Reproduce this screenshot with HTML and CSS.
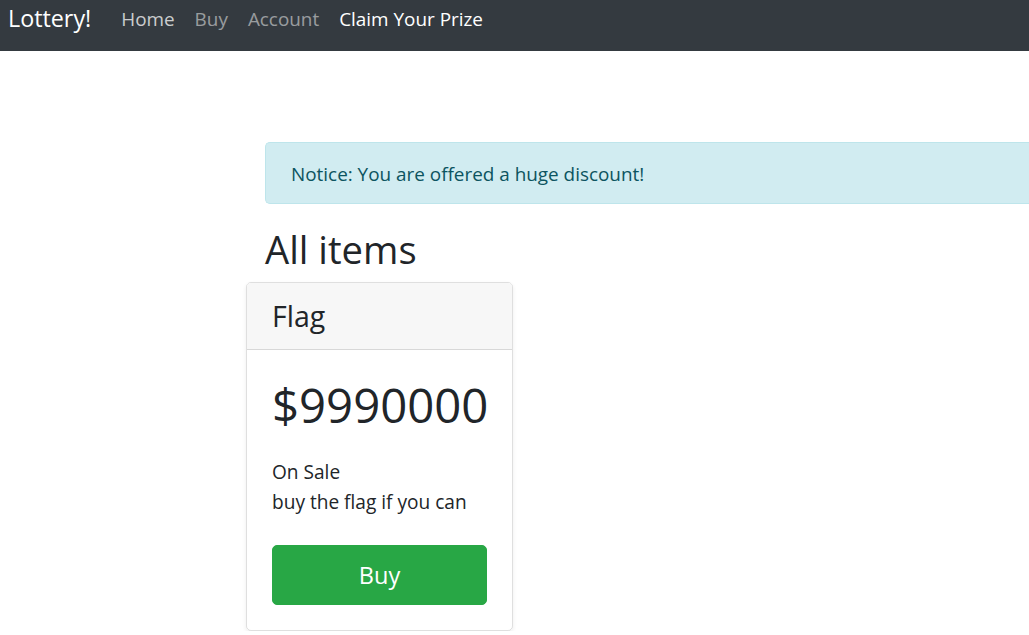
FILE: index.html
```html
<!DOCTYPE html>
<html lang="en">
<head>
<meta charset="utf-8">
<title>Lottery!</title>
<link rel="stylesheet" href="styles.css">
</head>
<body>
<nav class="navbar">
  <a class="brand" href="#">Lottery!</a>
  <ul class="nav">
    <li><a class="nav-link" href="#">Home</a></li>
    <li><a class="nav-link muted" href="#">Buy</a></li>
    <li><a class="nav-link muted" href="#">Account</a></li>
    <li><a class="nav-link active" href="#">Claim Your Prize</a></li>
  </ul>
</nav>
<main class="container">
  <div class="alert">Notice: You are offered a huge discount!</div>
  <h2 class="title">All items</h2>
  <div class="row">
    <div class="card">
      <div class="card-header"><h4 class="card-name">Flag</h4></div>
      <div class="card-body">
        <h1 class="price">$9990000</h1>
        <ul class="details">
          <li>On Sale</li>
          <li>buy the flag if you can</li>
        </ul>
        <button class="btn-buy" type="button">Buy</button>
      </div>
    </div>
  </div>
</main>
</body>
</html>
```
FILE: styles.css
```css
html, body {
  margin: 0;
  padding: 0;
  overflow: hidden;
}
body {
  font-family: "Open Sans", "Noto Sans", "Liberation Sans", sans-serif;
  color: #212529;
  background: #fff;
  font-size: 20px;
  line-height: 30px;
}
.navbar {
  height: 51px;
  box-sizing: border-box;
  background: #343a40;
  display: flex;
  align-items: flex-start;
  padding: 0 8px;
}
.brand {
  color: #fff;
  text-decoration: none;
  font-size: 23.3px;
  line-height: 37px;
  margin-right: 20px;
}
.nav {
  list-style: none;
  margin: 0;
  padding: 0;
  display: flex;
}
.nav-link {
  display: block;
  padding: 0 10px;
  line-height: 38px;
  font-size: 18.9px;
  color: rgba(255, 255, 255, 0.75);
  text-decoration: none;
}
.nav-link.muted {
  color: rgba(255, 255, 255, 0.5);
}
.nav-link.active {
  color: #fff;
}
.container {
  margin-left: 265px;
  padding-top: 91px;
}
.alert {
  background: #d1ecf1;
  border: 1px solid #bee5eb;
  border-right: none;
  color: #0c5460;
  border-radius: 5px 0 0 5px;
  padding: 16px 25px 14px;
  font-size: 18.9px;
  line-height: 30px;
  margin-bottom: 20px;
}
.title {
  margin: 0 0 10px;
  padding-top: 3px;
  font-size: 38.2px;
  line-height: 45px;
  font-weight: 400;
}
.row {
  display: flex;
  margin-left: -19px;
}
.card {
  width: 267px;
  box-sizing: border-box;
  border: 1px solid rgba(0, 0, 0, 0.125);
  border-radius: 5px;
  box-shadow: 0 2px 4px rgba(0, 0, 0, 0.075);
  overflow: hidden;
}
.card-header {
  background: #f7f7f7;
  border-bottom: 1px solid rgba(0, 0, 0, 0.125);
  padding: 15px 25px;
}
.card-name {
  margin: 0;
  font-size: 28.5px;
  line-height: 36px;
  font-weight: 400;
}
.card-body {
  padding: 25px;
}
.price {
  margin: 0;
  font-size: 47.3px;
  line-height: 60px;
  font-weight: 400;
  white-space: nowrap;
}
.details {
  list-style: none;
  margin: 22px 0 28px;
  padding: 0;
  font-size: 19.1px;
  line-height: 30px;
}
.btn-buy {
  display: block;
  width: 100%;
  height: 60px;
  border: 1px solid #28a745;
  background: #28a745;
  color: #fff;
  border-radius: 5px;
  font-family: inherit;
  font-size: 23.5px;
  line-height: 37px;
  padding: 0;
}
```
